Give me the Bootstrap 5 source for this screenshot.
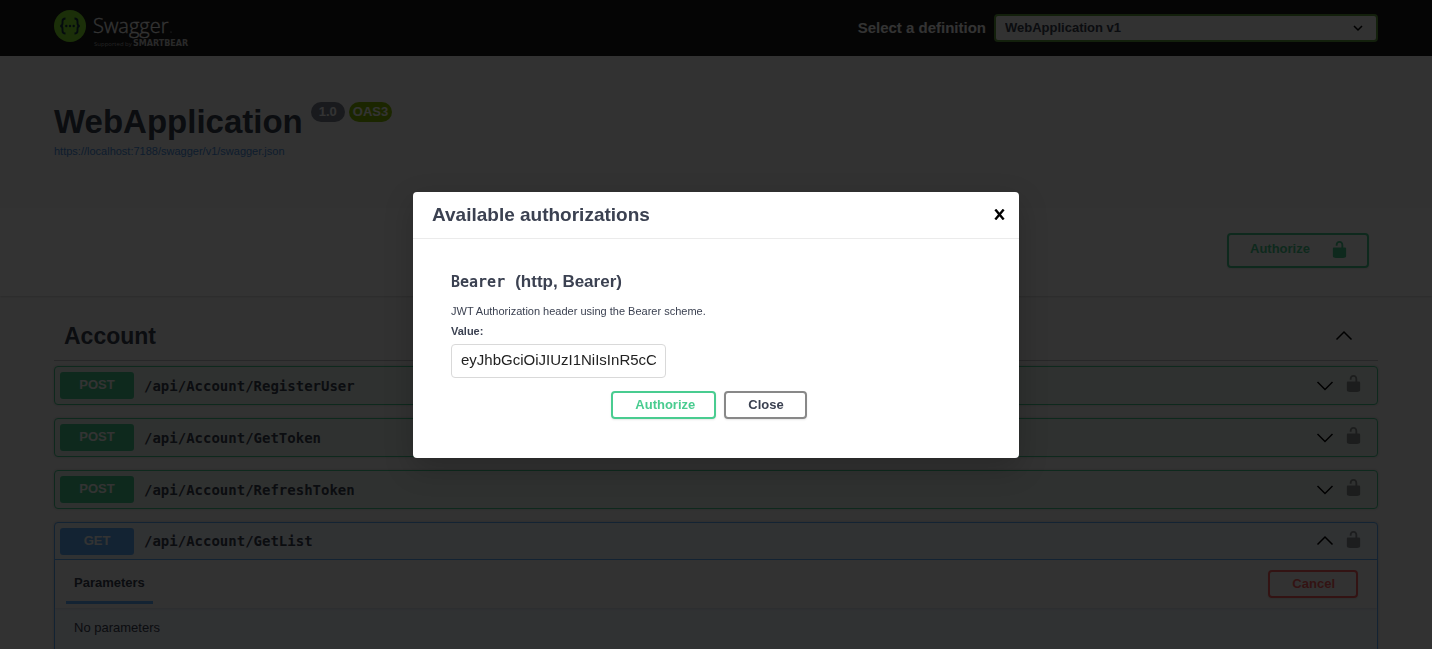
<!DOCTYPE html>
<html lang="en">
<head>
<meta charset="utf-8">
<meta name="viewport" content="width=device-width, initial-scale=1">
<title>Swagger UI</title>
<link href="https://cdn.jsdelivr.net/npm/bootstrap@5.3.0/dist/css/bootstrap.min.css" rel="stylesheet">
<style>
  body { font-family: "Liberation Sans", Arial, sans-serif; color: #3b4151; background: #fafafa; font-size: 14px; line-height: 20px; }
  .wrap { padding-left: 54px; padding-right: 54px; }
  .topbar { background: #1b1b1b; height: 56px; }
  .topbar label { color: #fff; font-size: 15px; font-weight: 700; }
  .definition { width: 384px; height: 28px; padding: 0 32px 0 9px; border: 2px solid #62a03f; border-radius: 4px; font-size: 13px; font-weight: 700; color: #3b4151; background-color: #f7f7f7; background-position: right 12px center; background-size: 12px 12px;
    background-image: url("data:image/svg+xml,%3Csvg xmlns='http://www.w3.org/2000/svg' viewBox='0 0 12 12'%3E%3Cpath d='M2 4l4 4 4-4' fill='none' stroke='%23000' stroke-width='1.5'/%3E%3C/svg%3E"); }
  .info { padding-top: 46px; height: 152px; }
  .info h1 { font-size: 33px; line-height: 40px; font-weight: 700; }
  .info a { font-size: 11px; line-height: 18px; color: #4990e2; text-decoration: none; }
  .version { font-size: 13px; line-height: 19px; font-weight: 700; color: #fff; background: #7d8492; border-radius: 20px; padding: 0 8px; height: 20px; }
  .oas { background: #89bf04; padding: 0 4px; }
  .scheme { background: #fff; height: 88px; padding-top: 25px; box-shadow: 0 1px 2px rgba(0,0,0,.15); }
  .act { border: 2px solid #888; border-radius: 4px; background: transparent; font-size: 13px; line-height: 20px; font-weight: 700; color: #3b4151; box-shadow: 0 1px 2px rgba(0,0,0,.1); }
  .act-green { border-color: #49cc90; color: #49cc90; }
  .act-red { border-color: #ff6060; color: #ff6060; }
  .act-lg { width: 142px; height: 35px; padding: 0 18px 3px 21px; margin-right: 9px; }
  .tag { height: 49px; border-bottom: 1px solid rgba(59,65,81,.3); padding: 0 25px 0 10px; margin-bottom: 5px; }
  .tag h2 { font-size: 23px; line-height: 28px; font-weight: 700; }
  .op { border: 1px solid #49cc90; border-radius: 4px; background: #ecf6f1; margin-bottom: 13px; box-shadow: 0 0 3px rgba(0,0,0,.19); }
  .op-head { width: 100%; height: 37px; padding: 0 14px 0 5px; border: 0; background: transparent; color: inherit; }
  .chev { margin-right: 10px; }
  .padlock { margin-bottom: 4px; opacity: .4; }
  .verb { width: 74px; height: 27px; line-height: 26px; border-radius: 3px; background: #49cc90; color: #fff; font-size: 13px; font-weight: 700; text-align: center; }
  .route { font-family: "DejaVu Sans Mono", monospace; font-size: 14px; font-weight: 700; margin-left: 10px; }
  .op-get { border-color: #61affe; background: #eff7ff; }
  .op-get .verb { background: #61affe; }
  .op-get .op-head { border-bottom: 1px solid #61affe; }
  .section { height: 48px; background: #f9fbf9; padding: 0 19px 0 11px; box-shadow: 0 1px 2px rgba(0,0,0,.1); }
  .section h3 { font-size: 13px; line-height: 20px; font-weight: 700; height: 31px; padding: 0 8px; border-bottom: 3px solid #61affe; }
  .none { font-size: 13px; line-height: 20px; padding: 10px 19px 60px; }
  .modal-backdrop { --bs-backdrop-opacity: .8; }
  .modal-dialog { max-width: 606px; }
  .modal-content { border: 0; border-radius: 4px; color: #3b4151; box-shadow: 0 10px 30px rgba(0,0,0,.2); }
  .modal-header { height: 47px; padding: 0 14px 0 19px; border-color: #ebebeb; }
  .modal-header h2 { font-size: 19px; line-height: 24px; font-weight: 700; }
  .x { border: 0; background: transparent; padding: 0; width: 12px; height: 24px; line-height: 0; }
  .modal-body { padding: 30px 38px 39px; }
  .modal-body h4 { font-size: 17px; line-height: 26px; font-weight: 700; margin-bottom: 7px; }
  .modal-body code { font-family: "DejaVu Sans Mono", monospace; font-size: 15px; color: inherit; margin-right: 10px; }
  .modal-body p, .modal-body label { font-size: 11px; line-height: 18px; }
  .modal-body label { margin: 2px 0 4px; }
  .token { width: 215px; height: 34px; border: 1px solid #d9d9d9; border-radius: 4px; padding: 0 9px 2px; font-size: 15px; color: #222; }
  .buttons { padding-top: 13px; margin-right: 14px; }
  .act-sm { height: 28px; padding: 0 19px 0 22px; }
  .act-sm:not(.act-green) { padding-right: 21px; }
</style>
</head>
<body class="modal-open overflow-hidden">
<svg class="d-none">
  <symbol id="lock" viewBox="0 0 20 20"><path d="M15.800 8H14V5.600C14 2.703 12.665 1 10 1 7.334 1 6 2.703 6 5.600V6h2v-.801C8 3.754 8.797 3 10 3c1.203 0 2 .754 2 2.199V8H4c-.553 0-1 .646-1 1.199V17c0 .549.428 1.139.951 1.307l1.197.387C5.672 18.861 6.550 19 7.100 19h5.800c.549 0 1.428-.139 1.951-.307l1.196-.387c.524-.167.953-.757.953-1.306V9.199C17 8.646 16.352 8 15.800 8z"/></symbol>
  <symbol id="down" viewBox="0 0 18 18"><path d="M1.500 5L9 12.500 16.500 5" fill="none" stroke="#000" stroke-width="1.500"/></symbol>
  <symbol id="up" viewBox="0 0 18 18"><path d="M1.500 12.500L9 5l7.500 7.500" fill="none" stroke="#000" stroke-width="1.500"/></symbol>
</svg>

<header class="topbar wrap d-flex align-items-center justify-content-between">
  <a href="#" aria-label="Swagger">
    <svg class="d-block" width="140" height="44" viewBox="0 0 140 44">
      <circle cx="16" cy="20" r="16" fill="#85ea2d"/>
      <path d="M11.500 12.500c-2.500 0-3 .8-3 2.800v2c0 1.800-.7 2.700-2.300 2.700 1.600 0 2.300.9 2.300 2.700v2c0 2 .5 2.800 3 2.800M20.500 12.500c2.500 0 3 .8 3 2.800v2c0 1.800.7 2.700 2.300 2.700-1.600 0-2.300.9-2.300 2.700v2c0 2-.5 2.800-3 2.800" fill="none" stroke="#173647" stroke-width="1.900"/>
      <g fill="#173647"><circle cx="12.300" cy="20" r="1.200"/><circle cx="16" cy="20" r="1.200"/><circle cx="19.700" cy="20" r="1.200"/></g>
      <g fill="#fff" font-family="'Open Sans', sans-serif">
        <text x="39" y="27" font-size="20" font-weight="300" stroke="#fff" stroke-width=".3">Swagger</text>
        <circle cx="117" cy="26" r=".6"/>
        <text x="40" y="40" font-size="6" fill="#aaa">Supported by</text>
        <text x="79" y="40" font-size="8" font-weight="600" fill="#ccc" font-family="'DejaVu Sans', sans-serif">SMARTBEAR</text>
      </g>
    </svg>
  </a>
  <div class="d-flex align-items-center">
    <label for="definition" class="me-2">Select a definition</label>
    <select id="definition" class="form-select definition"><option>WebApplication v1</option></select>
  </div>
</header>

<main>
  <section class="info wrap">
    <div class="d-flex">
      <h1 class="mb-0 me-2">WebApplication</h1>
      <span class="version me-1">1.0</span><span class="version oas">OAS3</span>
    </div>
    <a class="d-block" href="#">https://localhost:7188/swagger/v1/swagger.json</a>
  </section>

  <section class="scheme wrap d-flex justify-content-end">
    <button type="button" class="act act-green act-lg d-flex align-items-center justify-content-between">Authorize <svg width="19" height="19" fill="currentColor"><use href="#lock"/></svg></button>
  </section>

  <section class="wrap pt-3">
    <div class="tag d-flex align-items-center justify-content-between">
      <h2 class="mb-0">Account</h2>
      <svg width="18" height="18"><use href="#up"/></svg>
    </div>

    <div class="op"><button type="button" class="op-head d-flex align-items-center">
      <span class="verb">POST</span><span class="route me-auto">/api/Account/RegisterUser</span>
      <svg class="chev" width="18" height="18"><use href="#down"/></svg><svg class="padlock" width="19" height="19"><use href="#lock"/></svg>
    </button></div>
    <div class="op"><button type="button" class="op-head d-flex align-items-center">
      <span class="verb">POST</span><span class="route me-auto">/api/Account/GetToken</span>
      <svg class="chev" width="18" height="18"><use href="#down"/></svg><svg class="padlock" width="19" height="19"><use href="#lock"/></svg>
    </button></div>
    <div class="op"><button type="button" class="op-head d-flex align-items-center">
      <span class="verb">POST</span><span class="route me-auto">/api/Account/RefreshToken</span>
      <svg class="chev" width="18" height="18"><use href="#down"/></svg><svg class="padlock" width="19" height="19"><use href="#lock"/></svg>
    </button></div>
    <div class="op op-get"><button type="button" class="op-head d-flex align-items-center">
      <span class="verb">GET</span><span class="route me-auto">/api/Account/GetList</span>
      <svg class="chev" width="18" height="18"><use href="#up"/></svg><svg class="padlock" width="19" height="19"><use href="#lock"/></svg>
    </button>
      <div class="section d-flex align-items-center justify-content-between">
        <h3 class="align-self-end mb-1">Parameters</h3>
        <button type="button" class="act act-red act-sm">Cancel</button>
      </div>
      <p class="none mb-0">No parameters</p>
    </div>
  </section>
</main>

<div class="modal-backdrop show"></div>
<div class="modal d-block" tabindex="-1" role="dialog" aria-labelledby="auth-title">
  <div class="modal-dialog modal-dialog-centered">
    <div class="modal-content">
      <div class="modal-header">
        <h2 class="mb-0" id="auth-title">Available authorizations</h2>
        <button type="button" class="x" aria-label="Close dialog"><svg width="11" height="11" viewBox="0 0 10 10"><path d="M1.200 .5l7.600 9M8.800 .5L1.200 9.500" stroke="#000" stroke-width="2.200"/></svg></button>
      </div>
      <form class="modal-body">
        <h4><code>Bearer</code>(http, Bearer)</h4>
        <p class="mb-0">JWT Authorization header using the Bearer scheme.</p>
        <label class="fw-bold d-block" for="token">Value:</label>
        <input class="token d-block" id="token" type="text" value="eyJhbGciOiJIUzI1NiIsInR5cC">
        <div class="buttons d-flex justify-content-center gap-2">
          <button type="button" class="act act-green act-sm">Authorize</button>
          <button type="button" class="act act-sm">Close</button>
        </div>
      </form>
    </div>
  </div>
</div>
<script src="https://cdn.jsdelivr.net/npm/bootstrap@5.3.0/dist/js/bootstrap.bundle.min.js"></script>
</body>
</html>
